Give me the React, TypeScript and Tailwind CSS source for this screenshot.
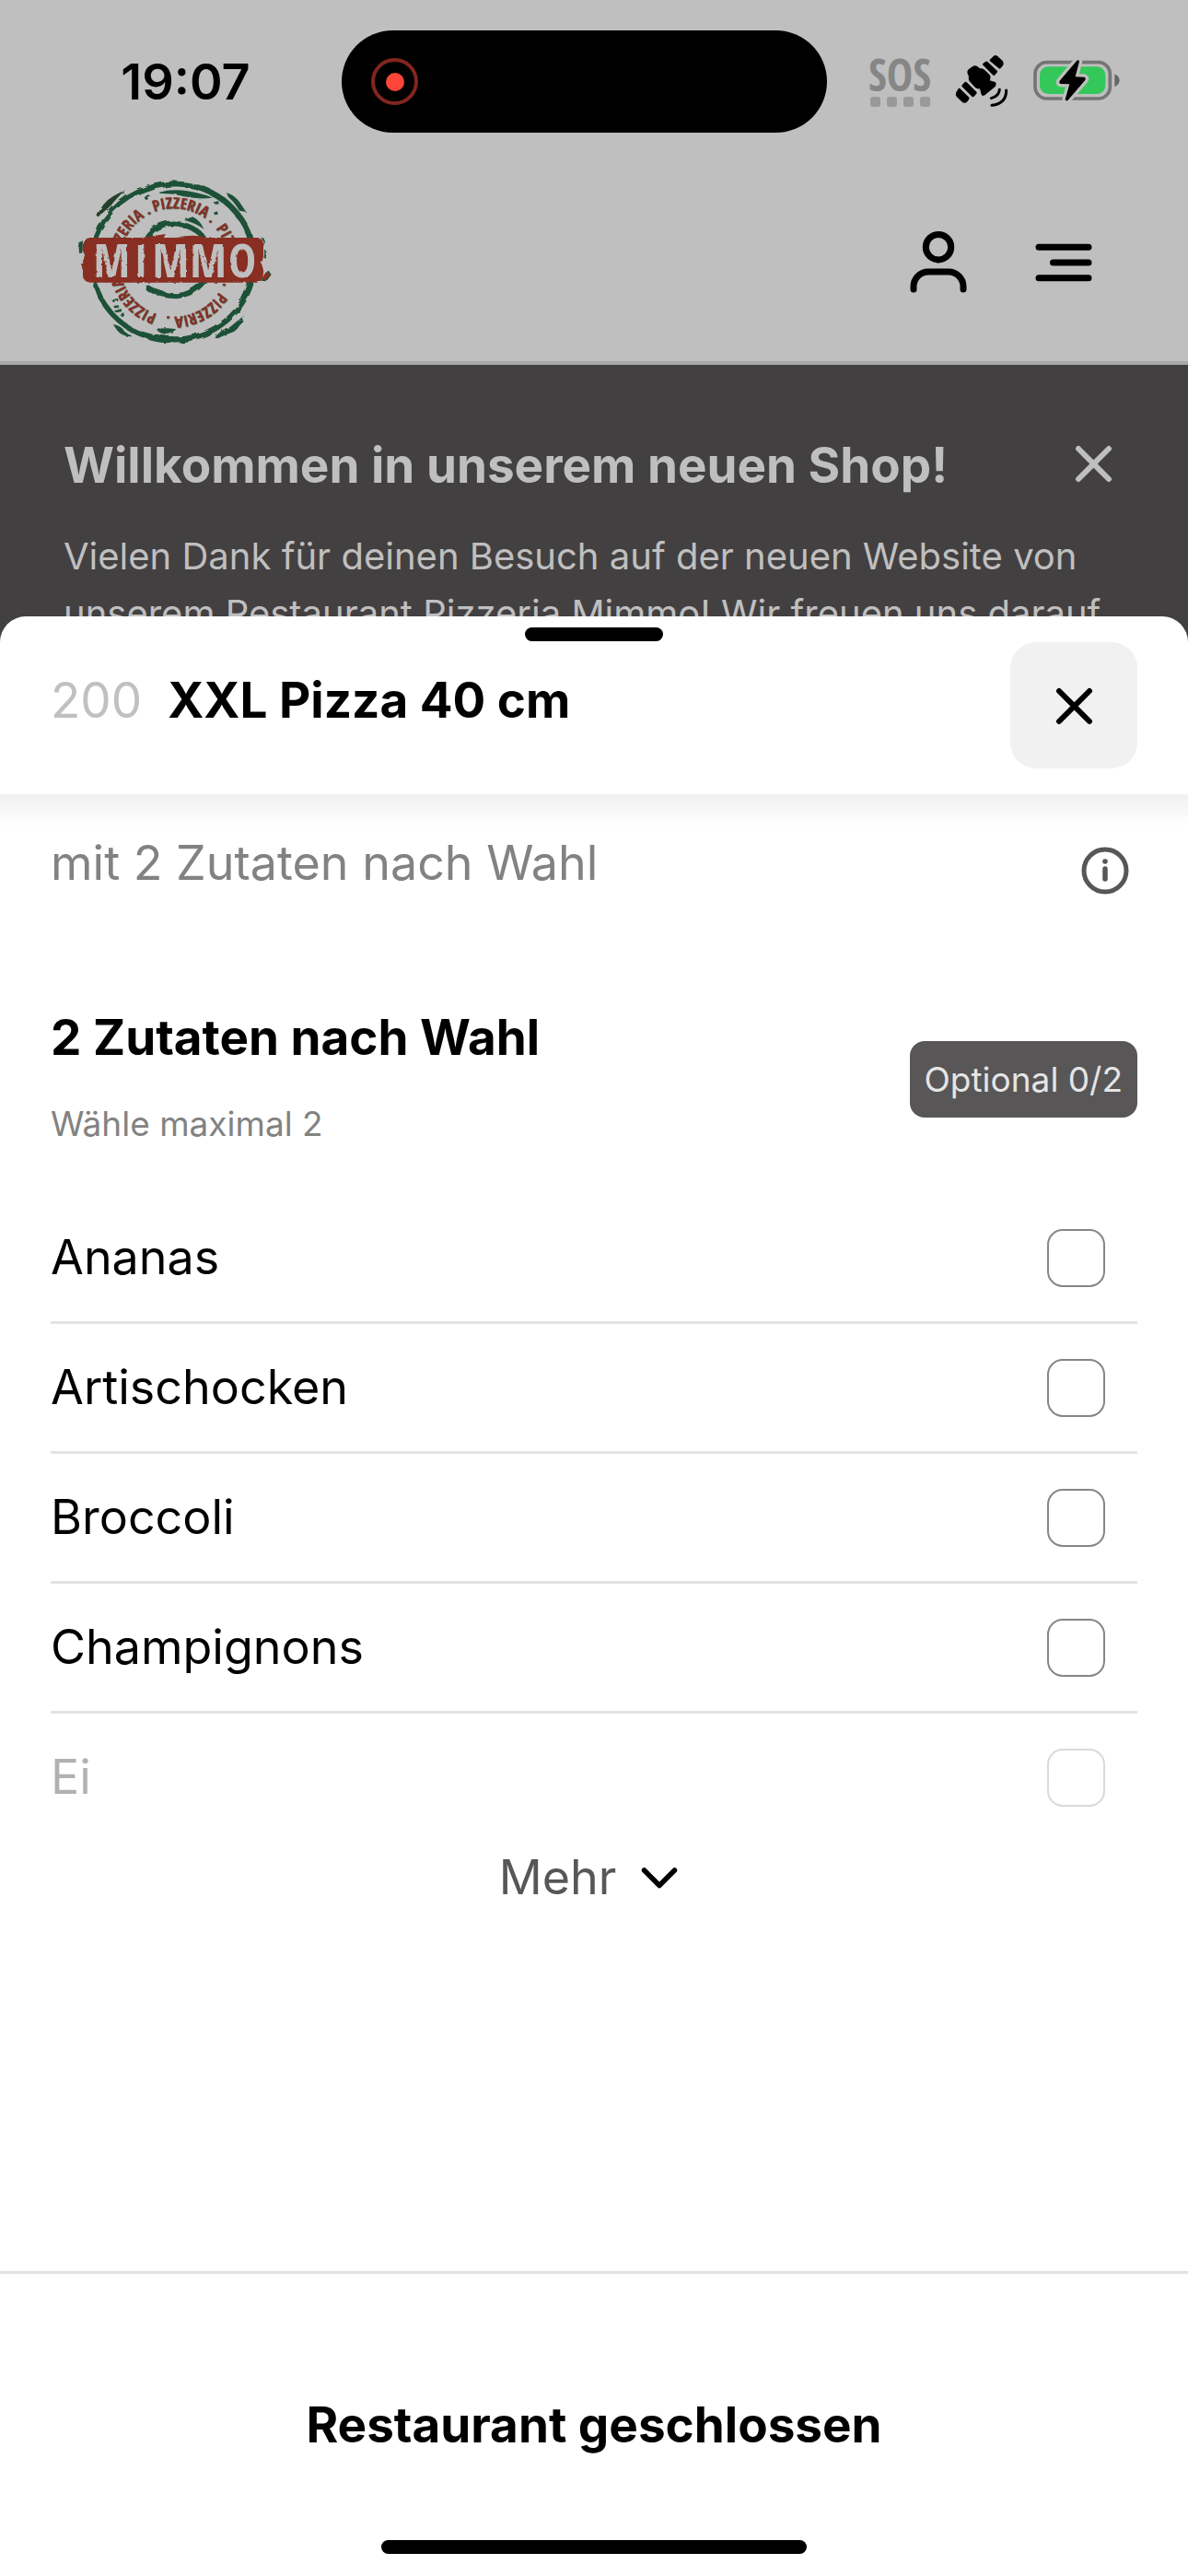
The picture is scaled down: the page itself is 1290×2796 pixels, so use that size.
import type { ReactNode } from "react";

const toppings = ["Ananas", "Artischocken", "Broccoli", "Champignons", "Ei"];

function CrossIcon({ className }: { className: string }) {
  return (
    <svg viewBox="0 0 64 64" className={className} fill="none" stroke="currentColor" strokeWidth="6" strokeLinecap="round" aria-hidden="true">
      <path d="M16 16L49 49M49 16L16 49" />
    </svg>
  );
}

function SatelliteIcon() {
  return (
    <svg viewBox="0 0 216 210" className="h-[70px] w-[72px]" fill="#000" aria-hidden="true">
      <path d="M62 84Q59 75 66 69L80 59Q89 56 96 62L103 67Q111 65 117 71L134 88Q139 95 134 106L153 112Q158 118 153 125L118 154Q110 158 107 152L102 133Q92 134 86 128L67 107Q63 101 66 93Z" />
      <path d="M111 55Q110 52 113 50L121 44Q124 42 127 45L158 74Q161 77 158 80L150 89Q147 91 144 88Z" />
      <path d="M134 39L147 26Q152 22 159 26L176 42Q182 50 178 56L169 67Q166 69 163 66L134 42Z" />
      <path d="M43 125Q42 122 45 120L53 111Q56 109 59 112L91 143Q93 146 91 149L82 159Q79 161 76 158Z" />
      <path d="M36 131L67 161Q69 164 66 168L60 176Q54 181 46 178L27 160Q21 152 25 144L32 133Q34 130 36 131Z" />
      <path d="M166 136Q164 157 139 164M188 138Q188 182 141 187" fill="none" stroke="#000" strokeWidth="9" strokeLinecap="round" />
    </svg>
  );
}

function BatteryIcon() {
  return (
    <svg viewBox="0 0 330 180" className="h-[60px] w-[110px]" aria-hidden="true">
      <rect x="27" y="32" width="244" height="118" rx="38" fill="none" stroke="#757575" strokeWidth="11" />
      <rect x="42" y="46" width="214" height="89" rx="27" fill="#34c759" />
      <path d="M286 70Q302 78 302 91Q302 104 286 112Z" fill="#666" />
      <path
        d="M163 26Q169 22 171 29L158 79L188 80Q194 84 190 90L134 155Q127 160 125 152L139 103L109 102Q103 98 107 92Z"
        fill="#000"
        stroke="#bfbfbf"
        strokeWidth="20"
        strokeLinejoin="round"
        paintOrder="stroke"
      />
    </svg>
  );
}

const words = [-21, 51, 123, 198, 271];
const ring = "M355 139A176 176 0 0 1 355 491";
const letters: [string, number][] = [
  ["M", 154],
  ["I", 249],
  ["M", 346],
  ["M", 468],
  ["O", 579],
];

function Logo() {
  return (
    <svg viewBox="0 0 720 630" className="h-[210px] w-[240px]" role="img" aria-label="Pizzeria Mimmo">
      <defs>
        <path id="ring" d={ring} />
        <filter id="rough" x="-10%" y="-10%" width="120%" height="120%">
          <feTurbulence type="fractalNoise" baseFrequency="0.025" numOctaves="2" seed="4" />
          <feDisplacementMap in="SourceGraphic" scale="16" />
        </filter>
        <filter id="worn" x="-10%" y="-10%" width="120%" height="120%">
          <feTurbulence type="fractalNoise" baseFrequency="0.06" numOctaves="2" seed="7" />
          <feDisplacementMap in="SourceGraphic" scale="8" />
        </filter>
      </defs>
      <g filter="url(#rough)" fill="none" stroke="#1f5138" strokeLinecap="round">
        <path d="M103 232A258 256 0 0 1 300 66" strokeWidth="15" />
        <path d="M270 76A254 252 0 0 1 606 240" strokeWidth="18" />
        <path d="M608 380A258 256 0 0 1 300 558" strokeWidth="19" />
        <path d="M330 565A254 252 0 0 1 102 390" strokeWidth="17" />
        <path d="M270 228Q300 188 355 187Q420 192 452 232" strokeWidth="17" />
        <path d="M272 398Q315 424 365 424Q420 418 452 378" strokeWidth="18" />
      </g>
      <g filter="url(#worn)" fill="#1f5138">
        <path d="M106 164Q124 118 160 98L198 78Q170 106 152 128Q128 150 110 166Z" fill="#21402a" />
        <path d="M528 88Q560 98 574 124L592 150L570 146Q552 116 534 102Z" />
        <path d="M310 86Q350 74 400 82Q450 90 482 104Q440 110 390 100Q350 88 310 90Z" />
        <path d="M390 176L418 166Q444 180 454 206Q430 190 412 184Z" />
        <path d="M258 104L272 94L280 98L268 112Z" />
        <path d="M486 120L500 114L504 124L492 126Z" />
        <path d="M490 560Q508 532 540 524L584 488Q578 520 552 540Q520 552 500 562Z" />
        <path d="M158 516Q186 520 196 540L222 556Q188 556 172 536Z" />
        <path d="M300 532Q330 526 364 532Q354 546 322 546Q306 544 300 532Z" />
        <path d="M154 436l20-4 2 8-18 4zM160 456l16-2 2 6-14 4zM162 472l24-6 2 8-20 4zM186 480l8-2-4 10-8 2z" />
        <path d="M486 152l12-4 2 10-10 2z" />
        <path d="M46 250L60 244L58 284L48 284Z" />
        <path d="M640 232L654 240L652 254M652 276l6 0-2 26-6-2zM640 374L664 340L674 354L658 376Z" />
      </g>
      <g
        fill="#8c3026"
        fontFamily='"Open Sans Condensed", "Roboto Condensed", sans-serif'
        fontWeight="700"
        fontSize="51"
        className="drop-shadow-[2px_1px_0_#23452d]"
      >
        {words.map((angle) => (
          <text key={angle} transform={`rotate(${angle} 355 315)`}>
            <textPath href="#ring">PIZZERIA .</textPath>
          </text>
        ))}
      </g>
      <g filter="url(#worn)">
        <path d="M82 234H628Q648 236 648 256V296L642 318L648 340Q650 376 628 380H84Q60 378 60 358V340L54 322L62 306L66 290L58 272Q60 236 82 234Z" fill="#882f24" />
        <path d="M236 236L330 222L322 236M366 232Q420 222 462 232L440 238Z" fill="#882f24" />
        <path d="M656 346L672 354L652 374L644 366Z" fill="#882f24" />
      </g>
      <g
        filter="url(#worn)"
        fill="#bfbfbf"
        fontFamily='"Open Sans Condensed", "Roboto Condensed", sans-serif'
        fontWeight="700"
        fontSize="152"
        textAnchor="middle"
      >
        {letters.map(([letter, x]) => (
          <text key={x} x={x} y="364">
            {letter}
          </text>
        ))}
      </g>
      <path d="M128 290h3M140 300h3M152 296h3M160 306h3M134 312h3M148 318h3M330 286h3M344 296h3M354 304h3M322 306h3M338 316h3M450 296h3M464 290h3M472 304h3M456 312h3" stroke="#882f24" strokeWidth="4" />
    </svg>
  );
}

function HeaderButton({ label, children }: { label: string; children: ReactNode }) {
  return (
    <button type="button" aria-label={label}>
      <svg viewBox="0 0 72 72" className="size-[72px]" fill="none" stroke="#000" strokeWidth="7" strokeLinecap="round" aria-hidden="true">
        {children}
      </svg>
    </button>
  );
}

export default function App() {
  return (
    <div className="flex min-h-screen flex-col bg-[#bfbfbf] font-['Inter',sans-serif] text-black">
      <div className="grid h-[177px] grid-cols-[371fr_527fr_392fr] items-center">
        <time className="pl-8 text-center text-[54px] leading-[64px] font-semibold">19:07</time>
        <div className="flex h-[111px] items-center rounded-full bg-black pl-8">
          <span className="flex size-[51px] items-center justify-center rounded-full border-4 border-[#81261f]">
            <span className="size-5 rounded-full bg-[#ff453a]" />
          </span>
        </div>
        <div className="flex items-center pl-11">
          <div className="flex w-[70px] flex-col items-center gap-1">
            <span className="font-['Open_Sans_Condensed','Roboto_Condensed',sans-serif] text-[48px] leading-[40px] font-bold text-[#868686]">SOS</span>
            <span className="flex gap-[7px]">
              <i className="size-[11px] rounded-[3px] bg-[#999]" />
              <i className="size-[11px] rounded-[3px] bg-[#999]" />
              <i className="size-[11px] rounded-[3px] bg-[#999]" />
              <i className="size-[11px] rounded-[3px] bg-[#999]" />
            </span>
          </div>
          <div className="flex items-center gap-[13px] pb-1 pl-[18px]">
            <SatelliteIcon />
            <BatteryIcon />
          </div>
        </div>
      </div>

      <header className="flex h-[219px] items-center justify-between border-b-4 border-[#a8a8a8] pr-[99px] pl-[70px]">
        <a href="#start" aria-label="Startseite">
          <Logo />
        </a>
        <nav className="flex gap-16">
          <HeaderButton label="Konto">
            <circle cx="36" cy="19.200" r="13.700" />
            <path d="M9 65v-3a16 16 0 0 1 16-16h22a16 16 0 0 1 16 16v3" />
          </HeaderButton>
          <HeaderButton label="Menü">
            <path d="M9 19.200H63M24.500 36H63M9 52.800H63" />
          </HeaderButton>
        </nav>
      </header>

      <section className="bg-[#434041] pt-[73px] pr-[71px] pl-[69px] text-[#bfbfbf]">
        <div className="flex items-center justify-between">
          <h2 className="text-[53px] leading-[72px] font-bold">Willkommen in unserem neuen Shop!</h2>
          <button type="button" aria-label="Hinweis schließen" className="pb-1">
            <CrossIcon className="size-[64px]" />
          </button>
        </div>
        <p className="mt-8 text-[40px] leading-[62px] whitespace-nowrap">
          Vielen Dank für deinen Besuch auf der neuen Website von
          <br />
          unserem Restaurant Pizzeria Mimmo! Wir freuen uns darauf
        </p>
      </section>

      <main role="dialog" aria-labelledby="dish-title" className="relative -mt-7 flex grow flex-col rounded-t-[28px] bg-white">
        <div className="absolute top-3 left-1/2 h-[15px] w-[150px] -translate-x-1/2 rounded-full bg-black" />
        <div className="flex items-center justify-between px-[55px] py-7">
          <div className="flex items-baseline gap-7 pb-3 text-[53px] leading-[64px]">
            <span className="text-[#c0c0c0]">200</span>
            <h1 id="dish-title" className="font-bold">XXL Pizza 40 cm</h1>
          </div>
          <button type="button" aria-label="Schließen" className="flex h-[137px] w-[138px] items-center justify-center rounded-[28px] bg-[#f1f1f1]">
            <CrossIcon className="size-[64px]" />
          </button>
        </div>
        <div className="h-9 bg-linear-to-b from-[#f1f1f1] to-white" />

        <div className="px-[55px]">
          <div className="flex items-start justify-between">
            <p className="text-[52px] leading-[78px] text-[#828282]">mit 2 Zutaten nach Wahl</p>
            <button type="button" aria-label="Informationen" className="mt-3 text-[#585656]">
              <svg viewBox="0 0 70 70" className="size-[70px]" fill="none" stroke="currentColor" strokeWidth="5" strokeLinecap="round" aria-hidden="true">
                <circle cx="35" cy="35" r="23" />
                <path d="M35 33V44" strokeWidth="5.500" />
                <circle cx="35" cy="25" r="2.800" fill="currentColor" stroke="none" />
              </svg>
            </button>
          </div>

          <section className="mt-[114px]">
            <div className="flex items-center justify-between">
              <div>
                <h2 className="text-[53px] leading-[64px] font-bold">2 Zutaten nach Wahl</h2>
                <p className="mt-[34px] text-[37px] leading-[56px] text-[#828282]">Wähle maximal 2</p>
              </div>
              <span className="rounded-[16px] bg-[#585657] px-4 text-[37px] leading-[83px] text-[#e5e5e5]">Optional 0/2</span>
            </div>
            <ul className="mt-12">
              {toppings.map((name) => (
                <li key={name} className="border-b-[3px] border-[#e3e3e3] last:border-b-0">
                  <label className="flex h-[138px] items-center justify-between pr-[35px] text-[52px] leading-[64px] in-[li:last-child]:opacity-30">
                    {name}
                    <input type="checkbox" className="size-[63px] appearance-none rounded-[17px] border-2 border-[#868686] bg-white checked:bg-black" />
                  </label>
                </li>
              ))}
            </ul>
            <button type="button" className="mx-auto mt-2 flex items-center gap-[15px] text-[52px] leading-[64px] text-[#585656]">
              Mehr
              <svg viewBox="0 0 64 64" className="size-[64px]" fill="none" stroke="#000" strokeWidth="5.500" strokeLinecap="round" strokeLinejoin="round" aria-hidden="true">
                <path d="M15.500 24L32 40.500L48.500 24" />
              </svg>
            </button>
          </section>
        </div>

        <footer className="mt-auto border-t-[3px] border-[#e3e3e3] pt-[132px] pb-6">
          <p className="text-center text-[53px] leading-[64px] font-bold">Restaurant geschlossen</p>
          <div className="mx-auto mt-[93px] h-[15px] w-[462px] rounded-full bg-black" />
        </footer>
      </main>
    </div>
  );
}
